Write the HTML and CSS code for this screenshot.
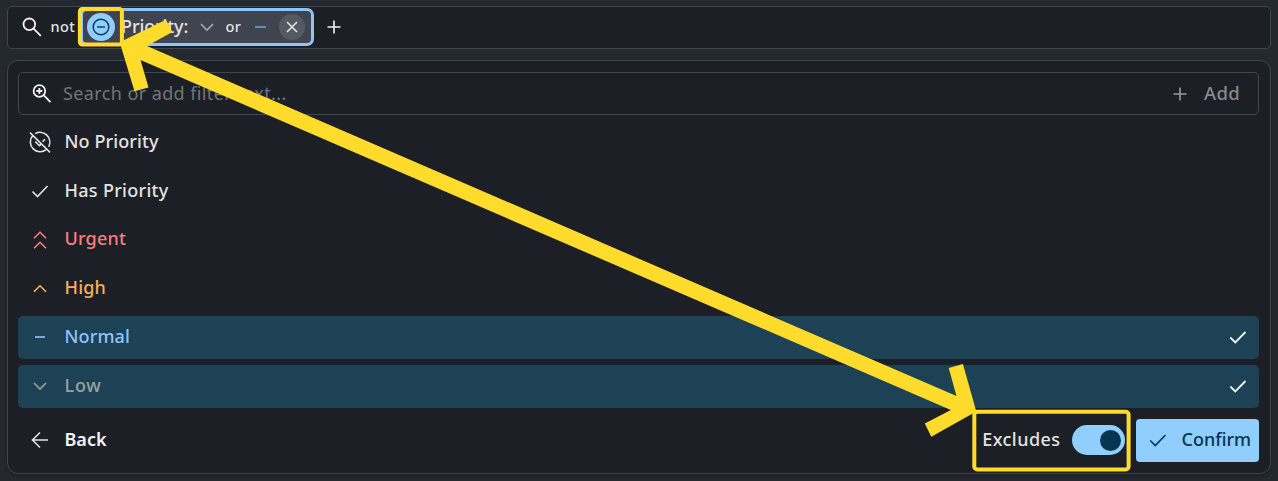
FILE: index.html
```html
<!DOCTYPE html>
<html lang="en">
<head>
<meta charset="utf-8">
<title>Filter</title>
<link rel="stylesheet" href="styles.css">
</head>
<body>
<main class="page">
  <div class="searchbar">
    <svg class="i-search" width="22" height="22" viewBox="0 0 22 22"><circle cx="8.3" cy="8.3" r="5.8"/><path d="M12.6 12.6l7.2 7.2"/></svg>
    <span class="not">not</span>
    <div class="chip">
      <span class="badge"><svg width="20" height="20" viewBox="0 0 20 20"><circle cx="10" cy="10" r="7.8"/><path d="M6 10h8"/></svg></span>
      <span class="chip-name">Priority:</span>
      <svg class="i-down" width="14" height="10" viewBox="0 0 14 10"><path d="M1 2l6 6 6-6"/></svg>
      <span class="or">or</span>
      <svg class="i-dash" width="11" height="4" viewBox="0 0 11 4"><path d="M0 2h11"/></svg>
      <span class="close"><svg width="12" height="12" viewBox="0 0 12 12"><path d="M1 1l10 10M11 1L1 11"/></svg></span>
    </div>
    <svg class="i-plus" width="14" height="14" viewBox="0 0 14 14"><path d="M7 .5v13M.5 7h13"/></svg>
  </div>
  <section class="panel">
    <div class="field">
      <svg class="icon zoom" width="22" height="22" viewBox="0 0 22 22"><circle cx="8.4" cy="8" r="5.8"/><path d="M12.6 12.2l6.9 7"/><path d="M8.4 5v6M5.4 8h6"/></svg>
      <span class="placeholder t">Search or add filter text...</span>
      <svg class="add-plus" width="14" height="14" viewBox="0 0 14 14"><path d="M7 .5v13M.5 7h13"/></svg>
      <span class="add t">Add</span>
    </div>
    <div class="row">
      <svg class="icon" width="24" height="24" viewBox="0 0 24 24"><path d="M7.2 3.6A9.8 9.8 0 0 1 20.6 16.8M18.8 19.2A9.8 9.8 0 0 1 5 5.3M2 2.6L22 22.4M7.3 11.6l4.2 4.1 2.1-2.1M14.6 11.6l2.4-2.4"/></svg>
      <span class="t nopri">No Priority</span>
    </div>
    <div class="row">
      <svg class="icon" width="24" height="24" viewBox="0 0 24 24"><path d="M4.5 12.5l5 5L19.5 7"/></svg>
      <span class="t haspri">Has Priority</span>
    </div>
    <div class="row urgent">
      <svg class="icon" width="24" height="24" viewBox="0 0 24 24"><path d="M6 10.3l6-6 6 6M6 20.3l6-6 6 6"/></svg>
      <span class="t up">Urgent</span>
    </div>
    <div class="row high">
      <svg class="icon" width="24" height="24" viewBox="0 0 24 24"><path d="M6 14.8l6-6 6 6"/></svg>
      <span class="t up">High</span>
    </div>
    <div class="row normal on">
      <svg class="icon" width="24" height="24" viewBox="0 0 24 24"><path d="M7 12h10"/></svg>
      <span class="t">Normal</span>
      <svg class="tick" width="24" height="24" viewBox="0 0 24 24"><path d="M4.3 12.5l5 5L19.5 7"/></svg>
    </div>
    <div class="row low on">
      <svg class="icon" width="24" height="24" viewBox="0 0 24 24"><path d="M6 9l6 6 6-6"/></svg>
      <span class="t">Low</span>
      <svg class="tick" width="24" height="24" viewBox="0 0 24 24"><path d="M4.3 12.5l5 5L19.5 7"/></svg>
    </div>
    <div class="footer">
      <svg class="icon" width="24" height="24" viewBox="0 0 24 24"><path d="M20 12H4.5M12 4.5L4.5 12l7.5 7.5"/></svg>
      <span class="t back">Back</span>
      <span class="t excludes">Excludes</span>
      <span class="toggle"><span class="knob"></span></span>
      <button class="confirm"><svg width="24" height="24" viewBox="0 0 24 24"><path d="M4.3 12.5l5 5L19.5 7"/></svg><span class="t">Confirm</span></button>
    </div>
  </section>
  <svg class="callout" width="1278" height="481" viewBox="0 0 1278 481">
    <rect x="79.9" y="8.9" width="42" height="35.6" rx="2.5"/>
    <rect x="974.3" y="411.8" width="154.3" height="57.7" rx="3"/>
    <path d="M119.7 42.2L166 19.8l6.3 12.3L147 46l809.5 350-7.8-28.1 14.2-3.8 13.4 47.4-45 25.2-6.5-13.2 26-13.6L140.5 60l8 27.5-14 3.8z"/>
  </svg>
</main>
</body>
</html>
```
FILE: styles.css
```css
* { box-sizing: border-box; }
body { margin: 0; background: #24282f; font-family: "Noto Sans", sans-serif; font-weight: 500; color: #e3e3e3; }
.page { position: relative; width: 1278px; height: 481px; padding: 6px 7px 0 6.5px; overflow: hidden; }
svg { fill: none; stroke: currentColor; stroke-width: 1.6; flex: none; display: block; }
.t { position: relative; top: -1px; font-size: 18px; line-height: 24px; white-space: nowrap; }

.searchbar { height: 42.5px; width: 1264.5px; border: 1px solid #40454d; border-radius: 5px; background: #1d1f26; display: flex; align-items: center; padding-left: 13px; }
.i-search { stroke-width: 1.8; color: #f2f2f2; }
.not { width: 29px; margin-left: 8px; font-size: 14.5px; letter-spacing: .4px; position: relative; top: -1px; }
.chip { width: 234.5px; height: 38px; border: 3px solid #8fc4fa; border-radius: 7px; background: #40444f; display: flex; align-items: center; padding-left: 4px; }
.badge { width: 28px; height: 28px; border-radius: 50%; background: #8fceff; color: #07344e; display: grid; place-items: center; flex: none; }
.badge svg { stroke-width: 1.4; }
.chip-name { width: 67px; margin-left: 6.5px; font-size: 18px; letter-spacing: -.1px; position: relative; top: -1px; white-space: nowrap; }
.i-down { margin-left: 12px; color: #aaa; }
.or { width: 17px; margin-left: 11.5px; font-size: 14.5px; letter-spacing: .4px; position: relative; top: -1px; }
.i-dash { margin-left: 12px; color: #65a5cf; }
.close { width: 26px; height: 26px; border-radius: 50%; background: #555a62; display: grid; place-items: center; margin-left: 13px; flex: none; }
.i-plus { margin-left: 13px; color: #f2f2f2; }

.panel { margin-top: 11.5px; width: 1264.5px; height: 414px; border: 1px solid #40454d; border-radius: 11px; background: #1d1f26; padding: 11px 11px 0 10.5px; display: flex; flex-direction: column; gap: 5.75px; box-shadow: 0 2px 3px #1d2127; }
.field, .row { height: 43px; flex: none; border-radius: 5px; display: flex; align-items: center; padding-left: 10px; }
.field { border: 1px solid #40484f; padding: 0 18px 0 12px; }
.zoom { stroke-width: 1.8; color: #f2f2f2; }
.placeholder { margin-left: 10px; color: #737579; font-weight: 400; letter-spacing: .4px; }
.add-plus { margin-left: auto; color: #999b9f; }
.add { margin-left: 17.5px; color: #88898c; font-size: 18.5px; letter-spacing: .3px; }
.row .t { margin-left: 12.5px; letter-spacing: .1px; }
.row .haspri { letter-spacing: .3px; }
.row .up { top: -2px; letter-spacing: .2px; }
.on { background: #1e4255; }
.urgent { color: #fb7c7c; }
.high { color: #ffae5b; }
.normal { color: #8fc4fa; }
.low { color: #98a0a5; }
.low .t { letter-spacing: .8px; }
.tick { margin-left: auto; margin-right: 9.5px; color: #f2f2f2; stroke-width: 1.8; }
.footer { height: 43px; margin-top: 5.5px; display: flex; align-items: center; padding-left: 10px; }
.back { margin-left: 12.5px; color: #f5f5f5; font-weight: 600; }
.excludes { margin-left: auto; letter-spacing: .45px; }
.toggle { width: 53px; height: 30px; border-radius: 15px; background: #8fceff; margin-left: 11px; display: flex; align-items: center; justify-content: flex-end; padding-right: 4px; flex: none; }
.knob { width: 21px; height: 21px; border-radius: 50%; background: #07344e; }
.confirm { width: 123.5px; height: 43px; margin-left: 11px; border: 0; border-radius: 4px; background: #8fceff; color: #07344e; font: inherit; display: flex; align-items: center; padding: 0 0 0 10px; flex: none; }
.confirm .t { margin-left: 12px; }
.callout { position: absolute; left: 0; top: 0; pointer-events: none; }
.callout rect { stroke: #ffdb2b; stroke-width: 4; }
.callout path { fill: #ffdb2b; stroke: none; }
```
